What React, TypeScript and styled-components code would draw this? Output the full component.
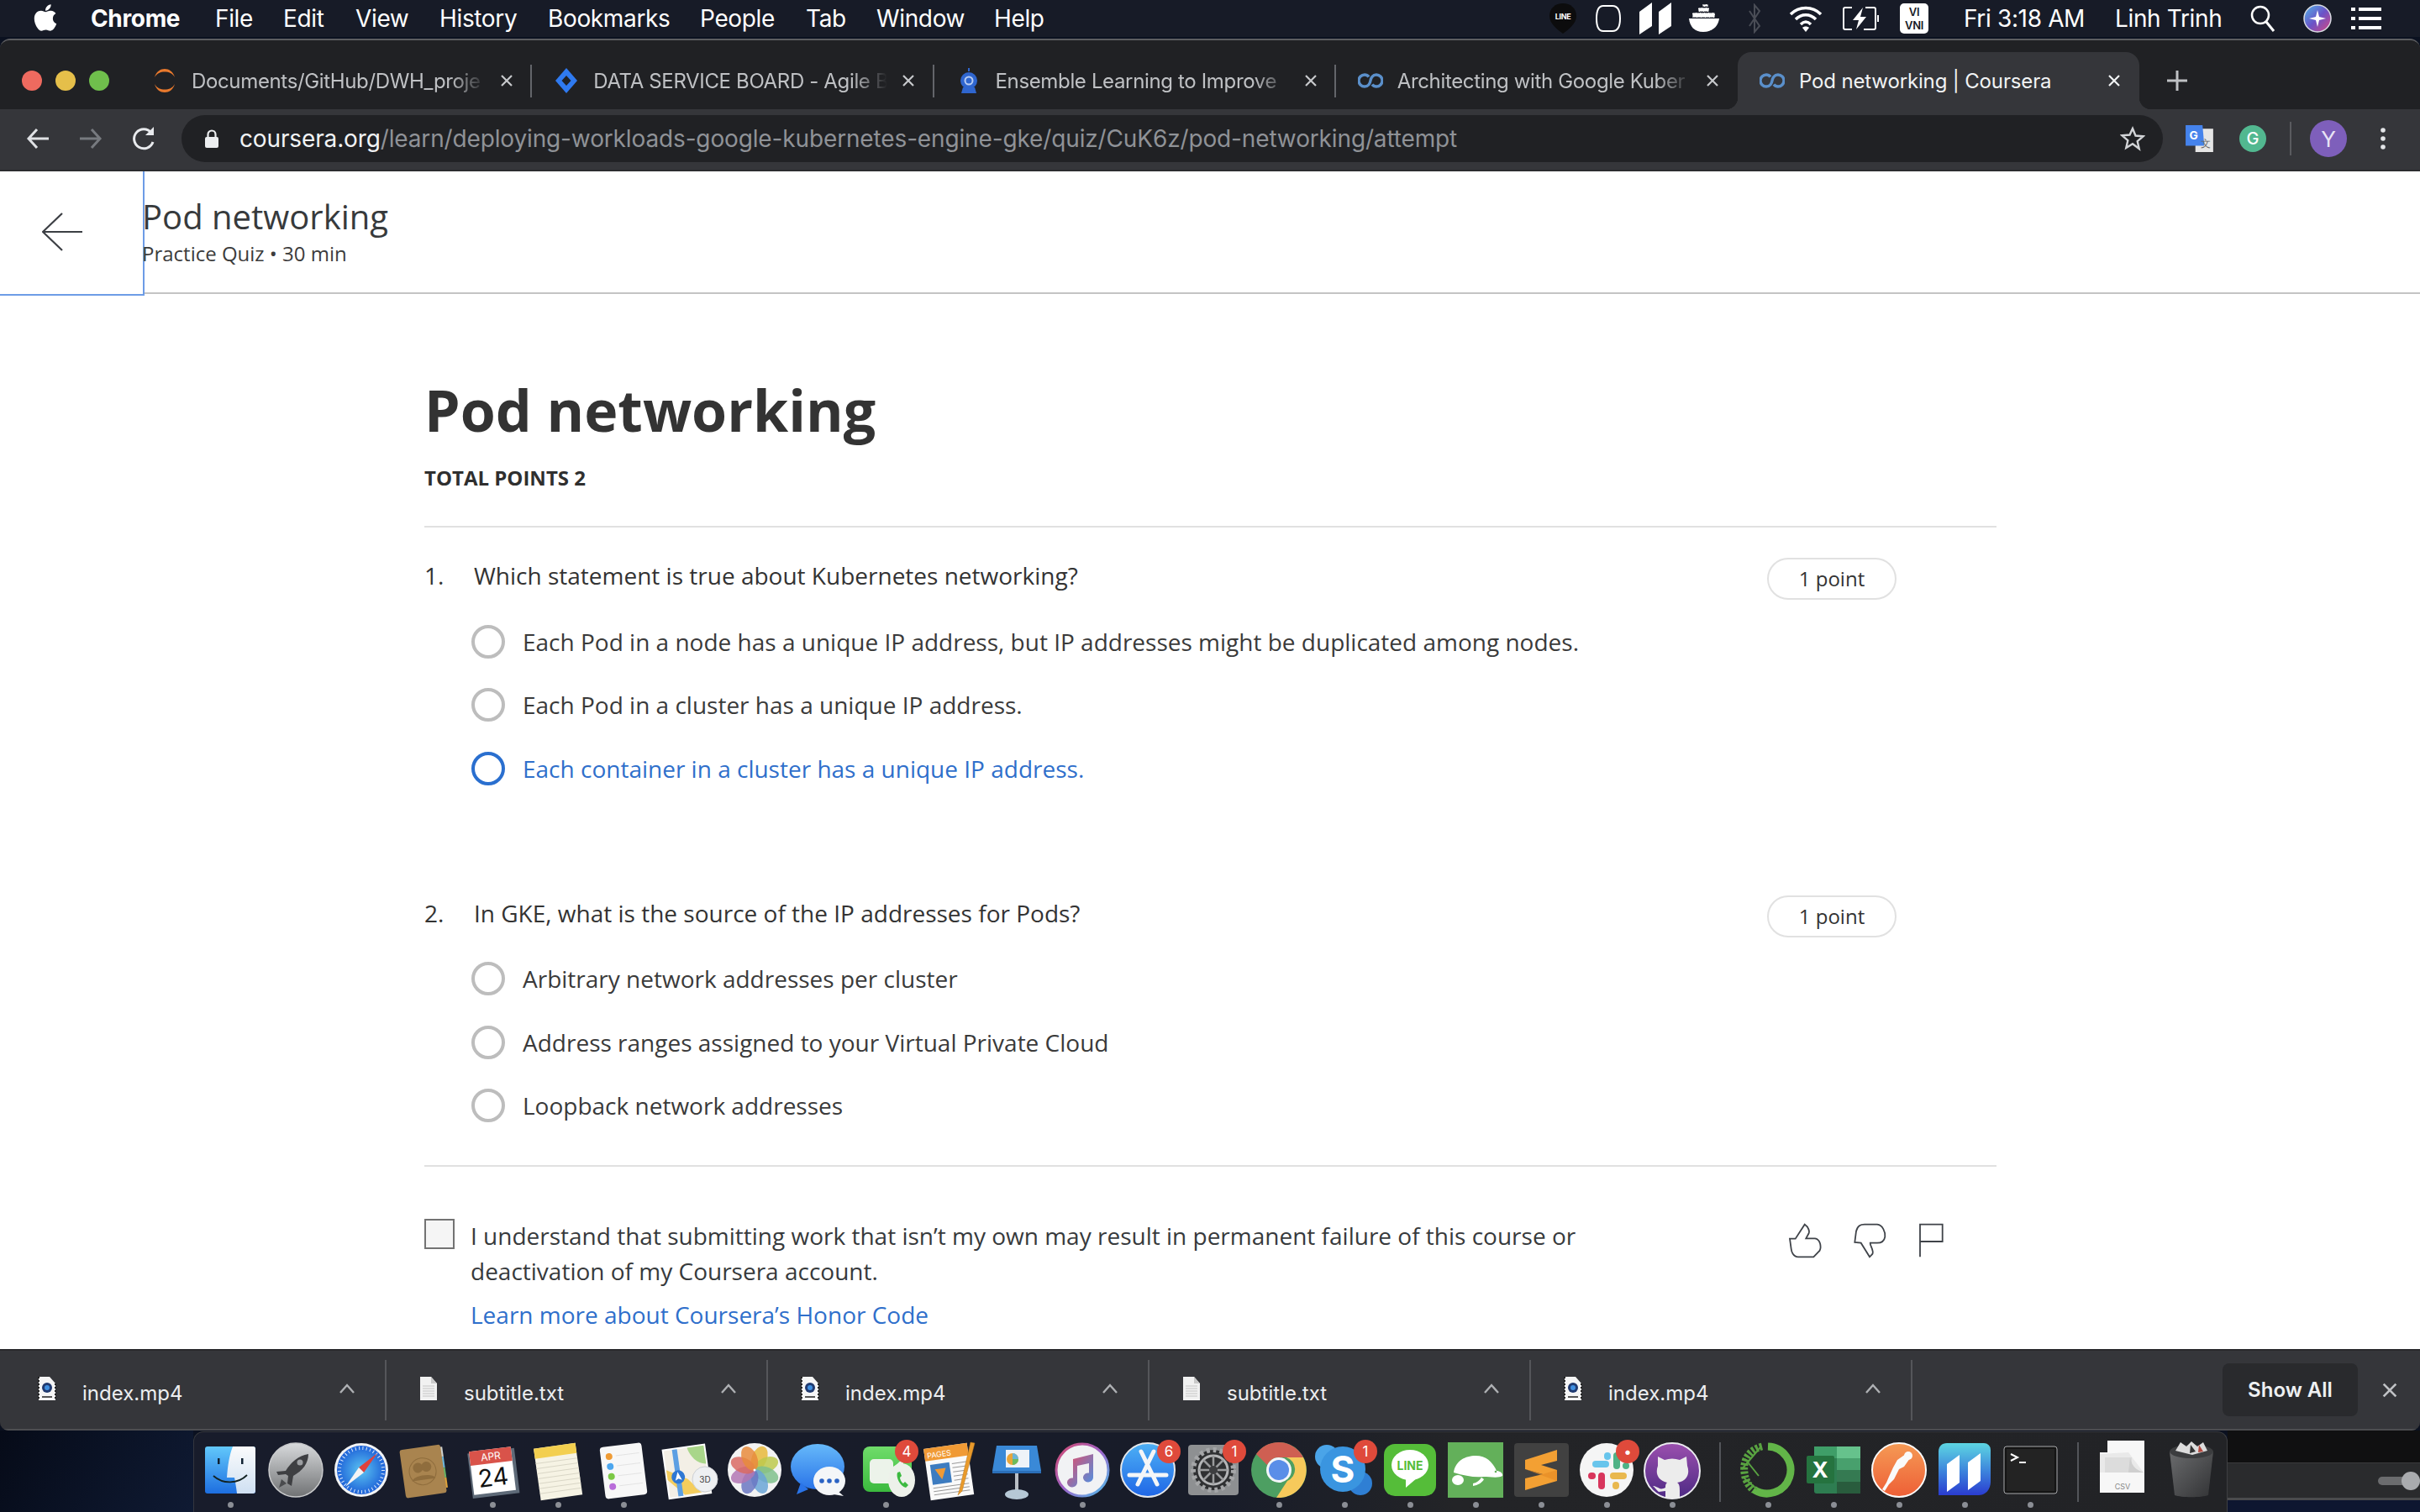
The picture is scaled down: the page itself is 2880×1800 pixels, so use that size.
import React from 'react';
import styled, { createGlobalStyle } from 'styled-components';
import { FaApple } from 'react-icons/fa';

const Global = createGlobalStyle`
  html, body { margin: 0; padding: 0; background: #0c1221; }
  body { overflow: hidden; font-family: "Open Sans", "Liberation Sans", sans-serif; }
  * { box-sizing: border-box; }
`;

const Desktop = styled.div`
  width: 2880px; height: 1800px; display: flex; flex-direction: column;
  background: #0b1120; overflow: hidden;
`;

/* ---------- menu bar ---------- */
const MenuBar = styled.div`
  height: 44px; flex: none; display: flex; align-items: center; padding-left: 38px;
  background: #171b27; color: #fff; font: 400 28px Inter, "Liberation Sans", sans-serif;
  letter-spacing: -0.35px;
`;
const MenuItem = styled.div<{ $w: number; $bold?: boolean }>`
  width: ${p => p.$w}px; flex: none; white-space: nowrap; font-weight: ${p => (p.$bold ? 700 : 400)};
`;
const AppleSlot = styled.div`
  width: 70px; flex: none; display: flex; align-items: center; padding-bottom: 3px;
  svg { width: 32px; height: 36px; }
`;
const Spacer = styled.div`flex: 1;`;
const TraySlot = styled.div<{ $w: number }>`
  width: ${p => p.$w}px; flex: none; height: 44px; display: flex; align-items: center; justify-content: center;
`;
const TrayText = styled.div<{ $w: number; $ml?: number }>`
  width: ${p => p.$w}px; flex: none; margin-left: ${p => p.$ml || 0}px; white-space: nowrap;
`;

/* ---------- browser window ---------- */
const Window = styled.div`
  margin-top: 2px; height: 1657px; flex: none; display: flex; flex-direction: column;
  border-radius: 12px 12px 10px 10px; overflow: hidden; background: #202124;
  border-top: 2px solid #5c5d60;
`;
const TabStrip = styled.div`
  height: 82px; flex: none; display: flex; align-items: flex-end; background: #202124;
`;
const Lights = styled.div`
  width: 155px; height: 68px; flex: none; display: flex; align-items: center; gap: 16px; padding-left: 26px;
`;
const Light = styled.div<{ $c: string }>`
  width: 24px; height: 24px; border-radius: 50%; background: ${p => p.$c};
`;
const Tab = styled.div<{ $active?: boolean; $sep?: boolean }>`
  width: 478.25px; height: 68px; flex: none; position: relative; display: flex; align-items: center;
  padding-left: 25px; color: ${p => (p.$active ? '#f1f3f4' : '#bfc1c4')};
  font: 400 24px Inter, "Liberation Sans", sans-serif; letter-spacing: ${p => (p.$active ? '-0.15px' : '-0.35px')};
  ${p => p.$active && `
    background: #35363a; border-radius: 16px 16px 0 0;
    &::before, &::after { content: ""; position: absolute; bottom: 0; width: 14px; height: 14px; }
    &::before { left: -14px; background: radial-gradient(circle at 0 0, transparent 14px, #35363a 14.5px); }
    &::after { right: -14px; background: radial-gradient(circle at 100% 0, transparent 14px, #35363a 14.5px); }
  `}
`;
const TabSep = styled.div`
  position: absolute; right: 0; top: 15px; height: 39px; width: 2px; background: #63656a;
`;
const FavSlot = styled.div`
  width: 32px; height: 32px; flex: none; display: flex; align-items: center; justify-content: center;
`;
const TabTitle = styled.div<{ $fade?: boolean }>`
  margin-left: 16px; width: 350px; overflow: hidden; white-space: nowrap; flex: none;
  ${p => p.$fade && `-webkit-mask-image: linear-gradient(90deg, #000 88%, transparent 100%);
    mask-image: linear-gradient(90deg, #000 88%, transparent 100%);`}
`;
const TabClose = styled.div`
  margin-left: 15px; width: 20px; height: 20px; flex: none; display: flex; align-items: center; justify-content: center;
`;
const PlusSlot = styled.div`
  margin-left: 31px; height: 68px; display: flex; align-items: center;
`;

const Toolbar = styled.div`
  height: 74px; flex: none; display: flex; align-items: center; background: #35363a;
  border-bottom: 2px solid #2b2c2f; padding: 0 0 2px 7px;
`;
const NavSlot = styled.div<{ $w: number }>`
  width: ${p => p.$w}px; flex: none; height: 56px; display: flex; align-items: center; justify-content: center;
`;
const Address = styled.div`
  width: 2358px; height: 56px; flex: none; margin-left: 5px; border-radius: 28px; background: #202124;
  display: flex; align-items: center; padding-left: 27px;
  font: 400 28px Inter, "Liberation Sans", sans-serif; letter-spacing: -0.14px; white-space: nowrap;
`;
const LockSlot = styled.div`width: 42px; flex: none; display: flex;`;
const Host = styled.span`color: #f1f3f4;`;
const UrlPath = styled.span`color: #8f9297;`;
const StarSlot = styled.div`
  margin-left: auto; margin-right: 21px; display: flex;
`;
const ToolSep = styled.div`width: 2px; height: 40px; background: #5a5b5f; flex: none; margin: 0 22px 0 25px;`;
const Avatar = styled.div`
  width: 44px; height: 44px; flex: none; border-radius: 50%; background: #7e5fbb; color: #e9e3f5;
  font: 400 26px Inter, sans-serif; display: flex; align-items: center; justify-content: center;
`;

/* ---------- page ---------- */
const Page = styled.div`
  flex: 1; min-height: 0; background: #fff; overflow: hidden; color: #333;
  font-family: "Open Sans", "Liberation Sans", sans-serif;
`;
const PageHeader = styled.header`
  height: 146px; display: flex; border-bottom: 2px solid #c4c4c4;
`;
const BackButton = styled.button`
  width: 170px; height: 146px; flex: none; padding: 0 22px 2px 0; border: 0; background: #fff;
  outline: 2px solid #6d9ce6; outline-offset: 0; display: flex; align-items: center; justify-content: center;
`;
const HeaderText = styled.div`
  margin-left: -1px; padding-top: 30px; display: flex; flex-direction: column;
`;
const HeaderTitle = styled.div`font-size: 40px; line-height: 48px; color: #373a3c;`;
const HeaderSub = styled.div`font-size: 24px; line-height: 34px; margin-top: 3px; color: #3c3c3c;`;

const Content = styled.main`width: 1871px; margin-left: 505px;`;
const Heading = styled.h1`
  margin: 93px 0 0; font-size: 68px; line-height: 90px; font-weight: 700; color: #333;
`;
const TotalPoints = styled.div`
  margin-top: 19px; font-size: 24px; line-height: 34px; font-weight: 700; color: #2f2f2f;
`;
const Divider = styled.div<{ $mt: number }>`
  height: 2px; background: #e1e1e1; margin-top: ${p => p.$mt}px;
`;
const Question = styled.section<{ $mt: number }>`margin-top: ${p => p.$mt}px;`;
const QuestionRow = styled.div`display: flex; align-items: center; font-size: 28px; line-height: 42px; height: 42px;`;
const Num = styled.div`width: 59px; flex: none;`;
const QText = styled.div`flex: 1;`;
const PointPill = styled.div`
  width: 154px; height: 50px; margin-right: 119px; margin-top: 8px; flex: none; border: 2px solid #e1e1e1; border-radius: 25px;
  display: flex; align-items: center; justify-content: center; font-size: 24px; color: #333;
`;
const Options = styled.div`margin-top: 20px; padding-left: 56px;`;
const Option = styled.div<{ $on?: boolean }>`
  height: 75.5px; display: flex; align-items: center; font-size: 28px;
  color: ${p => (p.$on ? '#2f6fcb' : '#3a3a3a')};
`;
const Radio = styled.div<{ $on?: boolean }>`
  width: 40px; height: 40px; flex: none; border-radius: 50%; margin-right: 21px;
  border: 4px solid ${p => (p.$on ? '#2a6fcf' : '#bdbdbd')};
`;
const Honor = styled.div`margin-top: 62px; display: flex; align-items: flex-start;`;
const Check = styled.div`
  width: 36px; height: 36px; flex: none; border: 2px solid #737373; background: #f5f5f5; margin-right: 19px;
`;
const HonorCopy = styled.div`
  font-size: 28px; line-height: 42px; margin-top: -1px; color: #373a3c;
`;
const HonorLink = styled.a`
  display: block; margin-top: 10px; color: #2f6fcb; text-decoration: none;
`;
const Feedback = styled.div`
  margin-left: auto; margin-right: 62px; margin-top: 4px; display: flex; gap: 35px;
`;

/* ---------- downloads ---------- */
const Downloads = styled.div`
  height: 97px; flex: none; display: flex; background: #35363a; border-top: 2px solid #29292c;
  border-bottom: 2px solid #4d4e51; font: 400 24px Inter, "Liberation Sans", sans-serif; color: #eceef0;
  position: relative; align-items: center; padding-left: 6px;
`;
const DownloadItem = styled.div`
  width: 454px; height: 72px; flex: none; border-right: 2px solid #55565a; display: flex; align-items: center;
  position: relative; padding-left: 38px;
  svg:first-child { margin-top: -4px; }
`;
const DownloadName = styled.div`margin-left: 30px; margin-top: 8px; flex: 1;`;
const Caret = styled.div`margin-right: 35px; display: flex; margin-top: 0;`;
const ShowAll = styled.div`
  margin-left: 369px; width: 161px; height: 63px; flex: none; background: #292a2d; border-radius: 8px;
  display: flex; align-items: center; justify-content: center; font-weight: 600; font-size: 24px; color: #eef0f2;
`;
const DownloadClose = styled.div`margin-left: 27px; display: flex;`;

/* ---------- dock row ---------- */
const BottomRow = styled.div`flex: 1; display: flex; min-height: 0;`;
const Wallpaper = styled.div`
  width: 230px; flex: none; background: linear-gradient(120deg, #060b18, #0f1a33);
`;
const Dock = styled.div`
  width: 2421px; flex: none; margin-top: 1px; border-radius: 12px 12px 0 0; padding: 10px 0 0 4px; display: flex;
  background: linear-gradient(90deg, #181c2b 0%, #181c29 50%, #232427 62%, #222326 100%);
  border-top: 1px solid #3a3b3e; border-left: 1px solid #33363e; border-right: 1px solid #3e3f42;
`;
const DockItem = styled.div`
  width: 78px; flex: none; display: flex; flex-direction: column; align-items: center; position: relative;
  svg { display: block; }
`;
const Dot = styled.div<{ $on?: boolean }>`
  width: 7px; height: 7px; border-radius: 50%; margin-top: 1px; background: ${p => (p.$on ? '#8b8e95' : 'transparent')};
`;
const Badge = styled.div`
  position: absolute; left: 50px; top: -1px; width: 28px; height: 28px; border-radius: 50%;
  background: #df4a3b; color: #fff; font: 400 17px Inter, sans-serif;
  display: flex; align-items: center; justify-content: center;
`;
const DockSep = styled.div`
  width: 36px; flex: none; display: flex; justify-content: center;
  &::after { content: ""; width: 2px; height: 71px; margin-top: 2px; background: #53555a; }
`;
const RightDesk = styled.div`flex: 1; display: flex; flex-direction: column; background: #0f0f10;`;
const RightTop = styled.div`height: 39px; flex: none; background: #101011; border-bottom: 1px solid #3a3a3c;`;
const RightPanel = styled.div`
  height: 44px; flex: none; background: #2a2b2d; display: flex; align-items: center; padding-left: 179px;
  border-bottom: 3px solid #4a4b4d; position: relative;
`;
const SliderTrack = styled.div`width: 40px; height: 10px; background: #6b6c6e; border-radius: 5px;`;
const SliderKnob = styled.div`
  position: absolute; left: 207px; top: 10px; width: 22px; height: 22px; border-radius: 50%; background: #a9abae;
`;
const RightBottom = styled.div`flex: 1; background: #0e1630;`;

/* ---------- small icons ---------- */
const T = styled.svg`display: block; flex: none;`;

const XIcon = ({ c = '#c8cacd', s = 18 }: { c?: string; s?: number }) => (
  <T width={s} height={s} viewBox="0 0 18 18"><path d="M3 3l12 12M15 3L3 15" stroke={c} strokeWidth="2.2" /></T>
);
const CourseraFav = () => (
  <T width="30" height="20" viewBox="0 0 30 20">
    <path d="M13 5.5C11.5 3.5 9.7 3 8 3a7 7 0 000 14c4.5 0 6.5-4 7-7s2.500-7 7-7a7 7 0 010 14c-1.700 0-3.500-.5-5-2.500" fill="none" stroke="#5a8fca" strokeWidth="3.400" />
  </T>
);
const OrangeFav = () => (
  <T width="30" height="32" viewBox="0 0 30 32">
    <path d="M3 12C5 5 10 2 15 2s10 3 12 10C24 7 20 5.500 15 5.500S6 7 3 12z" fill="#e8792d" />
    <path d="M3 20C5 27 10 30 15 30s10-3 12-10C24 25 20 26.500 15 26.500S6 25 3 20z" fill="#e8792d" />
  </T>
);
const JiraFav = () => (
  <T width="30" height="32" viewBox="0 0 30 32">
    <path d="M15 1l13 15-13 15L2 16z" fill="#2f7af0" />
    <path d="M15 10l5.500 6-5.500 6-5.500-6z" fill="#202124" />
  </T>
);
const GkeFav = () => (
  <T width="24" height="32" viewBox="0 0 24 32">
    <path d="M12 1v4" stroke="#2f66cf" strokeWidth="2" />
    <circle cx="12" cy="16" r="10" fill="#2f66cf" />
    <path d="M5 24l-2 7h18l-2-7z" fill="#2f66cf" />
    <circle cx="12" cy="16" r="4.500" fill="none" stroke="#b9cdf2" strokeWidth="2" />
  </T>
);

const AppIcon = ({ children }: { children: React.ReactNode }) => (
  <svg width="78" height="72" viewBox="0 0 78 72">{children}</svg>
);

const Finder = () => (
  <AppIcon>
    <defs>
      <linearGradient id="fb" x1="0" y1="0" x2="0" y2="1"><stop offset="0" stopColor="#62c8fb" /><stop offset="1" stopColor="#1d6ee0" /></linearGradient>
      <linearGradient id="fw" x1="0" y1="0" x2="0" y2="1"><stop offset="0" stopColor="#fafbfc" /><stop offset="1" stopColor="#cfe0f2" /></linearGradient>
    </defs>
    <rect x="9" y="7" width="60" height="56" rx="3" fill="url(#fb)" />
    <path d="M42 7h24a3 3 0 013 3v50a3 3 0 01-3 3H47c-1-8-2-14-3-19h-9c1-14 3-27 7-37z" fill="url(#fw)" />
    <rect x="24" y="21" width="2.500" height="7" fill="#123" />
    <rect x="52" y="21" width="2.500" height="7" fill="#123" />
    <path d="M19 42c11 10 29 10 40-1" fill="none" stroke="#122" strokeWidth="1.800" />
  </AppIcon>
);
const Launchpad = () => (
  <AppIcon>
    <defs><linearGradient id="lp" x1="0" y1="0" x2="0" y2="1"><stop offset="0" stopColor="#d8dadc" /><stop offset="1" stopColor="#707274" /></linearGradient></defs>
    <circle cx="39" cy="35" r="32" fill="url(#lp)" stroke="#c9cacc" strokeWidth="1.500" />
    <path d="M54 16C42 18 33 26 27 36l-11 1 2 4 9-1 3 2-1 9 5 3 2-12c11-6 18-15 18-26z" fill="#3e3f42" />
    <circle cx="44" cy="26" r="3.500" fill="#9c9ea1" />
    <path d="M22 46l-3 10 9-5z" fill="#4a4b4e" />
  </AppIcon>
);
const Safari = () => (
  <AppIcon>
    <defs><radialGradient id="sa"><stop offset="0" stopColor="#5bc4f2" /><stop offset="1" stopColor="#1e62d8" /></radialGradient></defs>
    <circle cx="39" cy="35" r="32" fill="#f2f3f4" />
    <circle cx="39" cy="35" r="29" fill="url(#sa)" />
    <circle cx="39" cy="35" r="26" fill="none" stroke="#dbe8fb" strokeWidth="4" strokeDasharray="1 3.400" />
    <path d="M58 15L36 32l6 6z" fill="#e0413c" />
    <path d="M20 55l22-17-6-6z" fill="#f4f4f4" />
  </AppIcon>
);
const Contacts = () => (
  <AppIcon>
    <g transform="rotate(-8 39 36)">
      <rect x="54" y="10" width="7" height="12" fill="#cfd2cf" />
      <rect x="54" y="22" width="7" height="13" fill="#6bb6dc" />
      <rect x="54" y="35" width="7" height="12" fill="#67b165" />
      <rect x="54" y="47" width="7" height="12" fill="#dfa23a" />
      <rect x="10" y="7" width="49" height="58" rx="3" fill="#a9844f" />
      <circle cx="34" cy="36" r="16" fill="none" stroke="#8f6d3d" strokeWidth="1" />
      <circle cx="29" cy="31" r="6" fill="#8f6d3d" />
      <circle cx="39" cy="31" r="6" fill="#8f6d3d" />
      <path d="M20 46c2-7 26-7 28 0z" fill="#8f6d3d" />
    </g>
  </AppIcon>
);
const Calendar = () => (
  <AppIcon>
    <g transform="rotate(-7 39 36)">
      <rect x="12" y="12" width="56" height="54" fill="#5e6a78" />
      <rect x="14" y="10" width="50" height="52" fill="#fff" />
      <rect x="14" y="10" width="50" height="17" fill="#d9534a" />
      <text x="39" y="23" textAnchor="middle" fontFamily="Inter, sans-serif" fontSize="12" fill="#fff">APR</text>
      <text x="39" y="54" textAnchor="middle" fontFamily="Inter, sans-serif" fontSize="29" fill="#111">24</text>
    </g>
  </AppIcon>
);
const Notes = () => (
  <AppIcon>
    <g transform="rotate(-8 39 36)">
      <rect x="14" y="6" width="50" height="62" fill="#f6f3e4" />
      <rect x="14" y="6" width="50" height="12" fill="#f3cf4f" />
      <path d="M14 24h50M14 30h50M14 36h50M14 42h50M14 48h50M14 54h50M14 60h50" stroke="#d9d6c6" strokeWidth="1" />
    </g>
  </AppIcon>
);
const Reminders = () => (
  <AppIcon>
    <g transform="rotate(-7 39 36)">
      <rect x="14" y="5" width="50" height="62" rx="4" fill="#f7f7f7" />
      <circle cx="24" cy="17" r="4" fill="#ef9b34" /><circle cx="24" cy="29" r="4" fill="#4ca6ee" />
      <circle cx="24" cy="41" r="4" fill="#7cc945" /><circle cx="24" cy="53" r="4" fill="#b96cd9" />
      <path d="M32 17h28M32 29h28M32 41h28M32 53h28" stroke="#e3e3e3" strokeWidth="1" />
    </g>
  </AppIcon>
);
const Maps = () => (
  <AppIcon>
    <g transform="rotate(-8 35 34)">
      <rect x="11" y="8" width="50" height="58" fill="#f3efe6" stroke="#fff" strokeWidth="2" />
      <path d="M40 9h20v22C50 30 42 20 40 9z" fill="#a9d68a" />
      <path d="M12 32l24 14 14 18H30L12 44z" fill="#f3c744" opacity="0.85" />
      <rect x="22" y="9" width="6" height="56" fill="#5c9fe3" />
      <circle cx="25" cy="42" r="8" fill="#2f78d4" />
      <path d="M25 36l4 10-4-2-4 2z" fill="#fff" />
    </g>
    <circle cx="58" cy="46" r="15" fill="#eef0f2" stroke="#cdd0d4" />
    <text x="58" y="50" textAnchor="middle" fontFamily="Inter, sans-serif" fontSize="10" fill="#444">3D</text>
  </AppIcon>
);
const Photos = () => {
  const c = ['#e8b93b', '#bdc94c', '#7fc08c', '#6aa5d6', '#6a77c2', '#b277b4', '#d96a63', '#e78b3c'];
  return (
    <AppIcon>
      <ellipse cx="39" cy="35" rx="32" ry="32" fill="#f3f3f3" />
      {c.map((col, i) => (
        <ellipse key={col} cx="39" cy="20" rx="9" ry="15" fill={col} opacity="0.85" transform={`rotate(${i * 45 + 22} 39 35)`} />
      ))}
      <circle cx="39" cy="35" r="1.500" fill="#fff" />
    </AppIcon>
  );
};
const Messages = () => (
  <AppIcon>
    <defs><linearGradient id="ms" x1="0" y1="0" x2="0" y2="1"><stop offset="0" stopColor="#66b9fa" /><stop offset="1" stopColor="#2a74e8" /></linearGradient></defs>
    <ellipse cx="36" cy="31" rx="32" ry="27" fill="url(#ms)" />
    <path d="M16 50l-5 14 14-6z" fill="#2a74e8" />
    <ellipse cx="50" cy="48" rx="19" ry="17" fill="#f4f6f8" />
    <path d="M60 60l7 6-12-2z" fill="#f4f6f8" />
    <circle cx="41" cy="48" r="2.800" fill="#2b63c4" /><circle cx="50" cy="48" r="2.800" fill="#2b63c4" /><circle cx="59" cy="48" r="2.800" fill="#2b63c4" />
  </AppIcon>
);
const FaceTime = () => (
  <AppIcon>
    <defs><linearGradient id="ft" x1="0" y1="0" x2="0" y2="1"><stop offset="0" stopColor="#6fdc6a" /><stop offset="1" stopColor="#3bba3e" /></linearGradient></defs>
    <rect x="12" y="7" width="58" height="54" rx="8" fill="url(#ft)" />
    <rect x="20" y="22" width="28" height="29" rx="5" fill="#ecf3ea" />
    <path d="M46 34l14-13v30z" fill="#ecf3ea" />
    <ellipse cx="58" cy="47" rx="16" ry="20" fill="#edf1ea" />
    <path d="M53 38c-2 6 3 16 10 18l3-3-4-4-2 2c-2-1-4-5-4-7l2-2-2-5z" fill="#3cba40" />
  </AppIcon>
);
const Pages = () => (
  <AppIcon>
    <g transform="rotate(-8 36 36)">
      <rect x="10" y="6" width="52" height="62" fill="#fafafa" />
      <rect x="10" y="6" width="52" height="15" fill="#f09a35" />
      <text x="13" y="18" fontFamily="Inter, sans-serif" fontSize="9" fill="#fff">PAGES</text>
      <rect x="15" y="26" width="23" height="24" fill="#3d7cc0" />
      <path d="M20 32h13l-6 13z" fill="#f09a35" />
      <path d="M41 28h17M41 33h17M41 38h17M41 43h17M41 48h17M15 54h43M15 58h43M15 62h43" stroke="#9a9a9a" strokeWidth="1" />
    </g>
    <path d="M62 2l-13 56-2 7 5-5 15-57z" fill="#e99a2b" stroke="#bd7a1f" strokeWidth="0.500" />
  </AppIcon>
);
const Keynote = () => (
  <AppIcon>
    <path d="M15 6h48l5 30H10z" fill="#3a89d7" />
    <path d="M10 36h58v3H10z" fill="#2b6fb8" />
    <rect x="26" y="11" width="28" height="21" fill="#eef3f8" />
    <circle cx="34" cy="22" r="7" fill="#e8a53a" /><path d="M34 22v-7a7 7 0 017 7z" fill="#6ab5d8" /><path d="M34 22h7a7 7 0 01-7 7z" fill="#6cbb5e" />
    <rect x="37" y="39" width="4" height="23" fill="#b9bec4" />
    <ellipse cx="39" cy="64" rx="14" ry="6" fill="#b6c8d6" />
  </AppIcon>
);
const ITunes = () => (
  <AppIcon>
    <defs>
      <linearGradient id="it" x1="0" y1="0" x2="1" y2="1"><stop offset="0" stopColor="#d4486c" /><stop offset="0.5" stopColor="#9d64c9" /><stop offset="1" stopColor="#4cc2ec" /></linearGradient>
      <linearGradient id="nt" x1="0" y1="0" x2="1" y2="1"><stop offset="0" stopColor="#e44b68" /><stop offset="1" stopColor="#4a93e6" /></linearGradient>
    </defs>
    <circle cx="39" cy="35" r="31" fill="#f1f2f4" stroke="url(#it)" strokeWidth="3" />
    <path d="M28 22l24-6v28a6 5.500 0 11-5-5.500V27l-14 3v20a6 5.500 0 11-5-5.500z" fill="url(#nt)" />
  </AppIcon>
);
const AppStore = () => (
  <AppIcon>
    <defs><linearGradient id="as" x1="0" y1="0" x2="0" y2="1"><stop offset="0" stopColor="#4db0f5" /><stop offset="1" stopColor="#1f66e6" /></linearGradient></defs>
    <circle cx="39" cy="35" r="32" fill="url(#as)" stroke="#e6e8ea" strokeWidth="2" />
    <path d="M46 13L27 52M31 13l19 39M17 41h44" stroke="#f4f6f8" strokeWidth="5" strokeLinecap="round" fill="none" />
  </AppIcon>
);
const SysPrefs = () => (
  <AppIcon>
    <rect x="9" y="5" width="60" height="60" rx="4" fill="#8e9092" />
    <circle cx="39" cy="35" r="24" fill="#2f3032" />
    <circle cx="39" cy="35" r="24" fill="none" stroke="#a5a6a8" strokeWidth="6" strokeDasharray="4 4" />
    <circle cx="39" cy="35" r="17" fill="none" stroke="#b4b5b7" strokeWidth="3" />
    <path d="M39 18v34M22 35h34M27 23l24 24M51 23L27 47" stroke="#9a9b9d" strokeWidth="2.500" />
    <circle cx="39" cy="35" r="5" fill="#3d3e40" />
  </AppIcon>
);
const Chrome = () => (
  <AppIcon>
    <circle cx="39" cy="35" r="33" fill="#4d9f62" />
    <path d="M39 2a33 33 0 0129 18H39a15 15 0 00-14 9L12 16A33 33 0 0139 2z" fill="#cf5f52" />
    <path d="M68 20a33 33 0 01-32 48l13-20a15 15 0 00-1-28z" fill="#f6c95b" />
    <circle cx="39" cy="35" r="15" fill="#f4f6f8" />
    <circle cx="39" cy="35" r="12" fill="#5a8ee8" />
  </AppIcon>
);
const Skype = () => (
  <AppIcon>
    <circle cx="18" cy="19" r="14" fill="#4aa4e8" />
    <circle cx="58" cy="51" r="14" fill="#2f7fd4" />
    <circle cx="37" cy="34" r="27" fill="#3a95e0" />
    <text x="37" y="50" textAnchor="middle" fontFamily="Inter, sans-serif" fontWeight="700" fontSize="44" fill="#fff">S</text>
  </AppIcon>
);
const Line = () => (
  <AppIcon>
    <rect x="8" y="4" width="62" height="62" rx="13" fill="#55bd39" />
    <ellipse cx="39" cy="29" rx="22" ry="18" fill="#fff" />
    <path d="M34 44v12l14-12z" fill="#fff" />
    <text x="39" y="35" textAnchor="middle" fontFamily="Inter, sans-serif" fontWeight="700" fontSize="14" fill="#55bd39">LINE</text>
  </AppIcon>
);
const Turtle = () => (
  <AppIcon>
    <rect x="6" y="2" width="66" height="66" fill="#63b05a" />
    <path d="M13 38c2-14 14-20 26-20 14 0 21 9 25 18 4 0 8 3 7 6-4 3-16 1-22 1-12 1-23-1-36-5z" fill="#fff" />
    <ellipse cx="18" cy="47" rx="7" ry="6" fill="#fff" />
    <path d="M36 51c5-1 8-4 10-7l3 2c-2 4-7 7-13 8z" fill="#fff" />
    <circle cx="63" cy="37" r="1.300" fill="#63b05a" />
  </AppIcon>
);
const Sublime = () => (
  <AppIcon>
    <rect x="7" y="3" width="65" height="64" rx="4" fill="#414141" />
    <path d="M58 11V24L39 29l19 6V48L20 59V45l21-5-21-6V23z" fill="#f3a033" />
    <path d="M20 34l21 6 17-5V48L20 34z" fill="#e68b25" opacity="0.7" />
  </AppIcon>
);
const Slack = () => (
  <AppIcon>
    <circle cx="39" cy="35" r="32" fill="#f5f5f5" />
    <rect x="22" y="24" width="20" height="8" rx="4" fill="#68c5ec" />
    <rect x="36" y="14" width="8" height="9" rx="4" fill="#68c5ec" />
    <rect x="47" y="14" width="8" height="20" rx="4" fill="#4fb286" />
    <rect x="58" y="26" width="8" height="8" rx="4" fill="#4fb286" />
    <rect x="43" y="38" width="20" height="8" rx="4" fill="#e9b84e" />
    <rect x="46" y="49" width="8" height="9" rx="4" fill="#e9b84e" />
    <rect x="29" y="38" width="8" height="20" rx="4" fill="#d8365c" />
    <rect x="17" y="38" width="9" height="8" rx="4" fill="#d8365c" />
  </AppIcon>
);
const Github = () => (
  <AppIcon>
    <defs><linearGradient id="gh" x1="0" y1="0" x2="0" y2="1"><stop offset="0" stopColor="#9b4fae" /><stop offset="1" stopColor="#4d2a84" /></linearGradient></defs>
    <circle cx="39" cy="36" r="33" fill="url(#gh)" stroke="#ecebf0" strokeWidth="2" />
    <path d="M22 19l8 4c6-2 12-2 18 0l8-4 1 11c3 8 1 18-12 20 3 2 3 6 3 10v9H31v-9l-8 1c-3-2-4-5-7-7 3 0 6 2 8 3 2 1 5 0 7-1 0-3 0-4 2-6-12-3-14-12-11-20z" fill="#ececec" />
  </AppIcon>
);
const CircleApp = () => (
  <AppIcon>
    <path d="M39 7a28 28 0 11-17 51" fill="none" stroke="#62b548" strokeWidth="9" />
    <path d="M32 7C16 11 9 24 11 38c1 10 6 17 11 21" fill="none" stroke="#59a341" strokeWidth="9" strokeDasharray="3 2" />
    <path d="M12 22l16 20M30 8L8 34M10 44l16 14" stroke="#59a341" strokeWidth="2" />
  </AppIcon>
);
const Excel = () => (
  <AppIcon>
    <rect x="16" y="7" width="55" height="56" rx="3" fill="#2e7d51" />
    <rect x="43" y="7" width="28" height="14" fill="#66c28c" />
    <rect x="16" y="7" width="27" height="14" fill="#3f9e68" />
    <rect x="43" y="21" width="28" height="14" fill="#48a06d" />
    <rect x="43" y="49" width="28" height="14" fill="#295c3d" />
    <rect x="43" y="35" width="28" height="14" fill="#357a52" />
    <rect x="7" y="18" width="33" height="33" rx="2" fill="#25733f" />
    <text x="23" y="44" textAnchor="middle" fontFamily="Inter, sans-serif" fontWeight="700" fontSize="26" fill="#fff">X</text>
  </AppIcon>
);
const Postman = () => (
  <AppIcon>
    <defs><linearGradient id="pm" x1="0" y1="0" x2="0" y2="1"><stop offset="0" stopColor="#f59a55" /><stop offset="1" stopColor="#ee5f36" /></linearGradient></defs>
    <circle cx="39" cy="35" r="32" fill="url(#pm)" stroke="#fafafa" strokeWidth="2" />
    <path d="M47 16l5 5-7 10-6 3-6 12-6 6-5 8-3-2 5-8 3-7 5-11 5-9z" fill="#fafafa" />
    <circle cx="50" cy="18" r="5" fill="#fafafa" />
  </AppIcon>
);
const Mweb = () => (
  <AppIcon>
    <defs><linearGradient id="mw" x1="0" y1="0" x2="0" y2="1"><stop offset="0" stopColor="#5dd6e2" /><stop offset="0.55" stopColor="#3c82dc" /><stop offset="1" stopColor="#2a3cd0" /></linearGradient></defs>
    <path d="M18 3h44a8 8 0 018 8v38c0 9-6 16-14 16H8V13C8 7 12 3 18 3z" fill="url(#mw)" />
    <path d="M18 28l15-11v33L18 61z" fill="#fff" />
    <path d="M43 26l15-11v33L43 59z" fill="#fff" />
  </AppIcon>
);
const Terminal = () => (
  <AppIcon>
    <rect x="8" y="7" width="63" height="56" rx="3" fill="#141414" stroke="#a9aaad" strokeWidth="1" />
    <rect x="11" y="10" width="57" height="50" fill="#232323" />
    <path d="M16 16l8 4-8 4" fill="none" stroke="#fff" strokeWidth="2" />
    <path d="M26 26h8" stroke="#fff" strokeWidth="2" />
  </AppIcon>
);
const CsvFile = () => (
  <AppIcon>
    <path d="M17 0h44v62H8V14h9z" fill="#f7f7f7" />
    <path d="M8 16l34-2 18 24H8z" fill="#e9e9e9" />
    <path d="M14 20h32v18H14z" fill="#dcdcdc" />
    <path d="M44 20c2 10 6 15 17 18l-19 0z" fill="#cfcfcf" />
    <text x="35" y="58" textAnchor="middle" fontFamily="Inter, sans-serif" fontSize="9" fill="#888">CSV</text>
  </AppIcon>
);
const Trash = () => (
  <AppIcon>
    <defs><linearGradient id="tr" x1="0" y1="0" x2="1" y2="1"><stop offset="0" stopColor="#6a6b6d" /><stop offset="1" stopColor="#323335" /></linearGradient></defs>
    <path d="M13 13h52l-6 52c-8 3-32 3-40 0z" fill="url(#tr)" />
    <ellipse cx="39" cy="13" rx="26" ry="8" fill="#3c3d3f" />
    <path d="M20 12l6-10 7 5 6-6 7 6 7-5 5 10-18 5z" fill="#dcdcdc" />
    <path d="M38 5l6 8-7 2z" fill="#333" /><path d="M48 5l5 8-6 1z" fill="#b3493f" />
  </AppIcon>
);

/* ---------- data ---------- */
const menus: [string, number, boolean?][] = [
  ['Chrome', 148, true], ['File', 81], ['Edit', 86], ['View', 100], ['History', 129],
  ['Bookmarks', 181], ['People', 126], ['Tab', 84], ['Window', 140], ['Help', 70],
];
const tabs: [string, React.ReactNode, boolean][] = [
  ['Documents/GitHub/DWH_proje', <OrangeFav key="o" />, true],
  ['DATA SERVICE BOARD - Agile B', <JiraFav key="j" />, true],
  ['Ensemble Learning to Improve', <GkeFav key="g" />, true],
  ['Architecting with Google Kuber', <CourseraFav key="c" />, false],
];
type DockEntry = { I: React.FC; on?: boolean; badge?: string; sep?: boolean };
const apps: DockEntry[] = [
  { I: Finder, on: true }, { I: Launchpad }, { I: Safari }, { I: Contacts }, { I: Calendar, on: true },
  { I: Notes, on: true }, { I: Reminders, on: true }, { I: Maps }, { I: Photos }, { I: Messages },
  { I: FaceTime, on: true, badge: '4' }, { I: Pages }, { I: Keynote }, { I: ITunes, on: true },
  { I: AppStore, badge: '6' }, { I: SysPrefs, badge: '1' }, { I: Chrome, on: true },
  { I: Skype, on: true, badge: '1' }, { I: Line, on: true }, { I: Turtle, on: true }, { I: Sublime, on: true },
  { I: Slack, on: true, badge: '•' }, { I: Github, on: true }, { I: CircleApp, on: true, sep: true },
  { I: Excel, on: true }, { I: Postman, on: true }, { I: Mweb, on: true }, { I: Terminal, on: true },
  { I: CsvFile, sep: true }, { I: Trash },
];

const Mp4Icon = () => (
  <T width="24" height="30" viewBox="0 0 24 30">
    <path d="M2 1h13l7 8v20H2z" fill="#f5f5f5" />
    <path d="M2 1v28M22 9v20" stroke="#222" strokeWidth="2" strokeDasharray="2 2" />
    <circle cx="12" cy="14" r="6" fill="#203a70" /><circle cx="12" cy="14" r="3" fill="#3f8fe0" />
    <rect x="6" y="24" width="12" height="2" fill="#555" />
  </T>
);
const TxtIcon = () => (
  <T width="24" height="30" viewBox="0 0 24 30">
    <path d="M2 1h13l7 8v20H2z" fill="#f1f1f1" />
    <path d="M15 1v8h7z" fill="#c9c9c9" />
    <path d="M5 12h14M5 15h14M5 18h14M5 21h14M5 24h14" stroke="#c4c4c4" strokeWidth="1" />
  </T>
);
const CaretIcon = () => (
  <T width="20" height="14" viewBox="0 0 20 14"><path d="M2 12l8-9 8 9" fill="none" stroke="#aeb0b3" strokeWidth="2.400" /></T>
);

const downloads: [string, boolean][] = [
  ['index.mp4', true], ['subtitle.txt', false], ['index.mp4', true],
  ['subtitle.txt', false], ['index.mp4', true],
];

export default function App() {
  return (
    <>
      <Global />
      <Desktop>
        <MenuBar>
          <AppleSlot><FaApple color="#fff" /></AppleSlot>
          {menus.map(([m, w, b]) => <MenuItem key={m} $w={w} $bold={b}>{m}</MenuItem>)}
          <Spacer />
          <TraySlot $w={54}>
            <T width="34" height="38" viewBox="0 0 34 38">
              <path d="M17 1c9 0 16 6 16 15 0 9-9 16-16 21C10 32 1 25 1 16 1 7 8 1 17 1z" fill="#0c0c0d" />
              <text x="17" y="20" textAnchor="middle" fontFamily="Inter, sans-serif" fontWeight="700" fontSize="9" fill="#fff">LINE</text>
            </T>
          </TraySlot>
          <TraySlot $w={54}>
            <T width="32" height="34" viewBox="0 0 32 34"><path d="M10 2h11c7 0 9 6 9 15s-2 15-9 15H10C4 32 2 26 2 17S4 2 10 2z" fill="none" stroke="#fff" strokeWidth="2" /></T>
          </TraySlot>
          <TraySlot $w={57}>
            <T width="42" height="40" viewBox="0 0 42 40"><path d="M2 12L17 1v28L2 39zM25 12L40 1v28L25 39z" fill="#fff" /></T>
          </TraySlot>
          <TraySlot $w={60}>
            <T width="38" height="34" viewBox="0 0 38 34">
              <path d="M1 17h36c-1 9-8 16-19 16S2 26 1 17z" fill="#fff" />
              <path d="M5 10h27v6H5zM12 4h13v5H12zM17 0h7v3h-7z" fill="#fff" stroke="#171b27" strokeWidth="0.800" strokeDasharray="4 1" />
            </T>
          </TraySlot>
          <TraySlot $w={59}>
            <T width="18" height="36" viewBox="0 0 18 36"><path d="M3 9l12 18-6 7V2l6 7L3 27" fill="none" stroke="#4a4d56" strokeWidth="2" /></T>
          </TraySlot>
          <TraySlot $w={64}>
            <T width="42" height="34" viewBox="0 0 42 34">
              <path d="M3 12c10-10 26-10 36 0M9 18c7-7 17-7 24 0M15 24c4-4 8-4 12 0" fill="none" stroke="#fff" strokeWidth="3.500" />
              <path d="M21 33l-4-5c2-2 6-2 8 0z" fill="#fff" />
            </T>
          </TraySlot>
          <TraySlot $w={67}>
            <T width="46" height="30" viewBox="0 0 46 30">
              <path d="M12 2H4a2 2 0 00-2 2v22a2 2 0 002 2h8M28 2h10a2 2 0 012 2v22a2 2 0 01-2 2H26" fill="none" stroke="#fff" strokeWidth="2" />
              <path d="M25 2L13 17h7l-3 11 12-15h-7z" fill="#fff" />
              <path d="M43 11v8" stroke="#fff" strokeWidth="2" />
            </T>
          </TraySlot>
          <TraySlot $w={60}>
            <T width="34" height="36" viewBox="0 0 34 36">
              <rect x="0" y="0" width="34" height="36" rx="5" fill="#fff" />
              <text x="17" y="15" textAnchor="middle" fontFamily="Inter, sans-serif" fontWeight="600" fontSize="13" fill="#171b27">VI</text>
              <text x="17" y="31" textAnchor="middle" fontFamily="Inter, sans-serif" fontWeight="600" fontSize="13" fill="#171b27">VNI</text>
            </T>
          </TraySlot>
          <TrayText $w={180} $ml={29}>Fri 3:18 AM</TrayText>
          <TrayText $w={143}>Linh Trinh</TrayText>
          <TraySlot $w={65}>
            <T width="32" height="34" viewBox="0 0 32 34"><circle cx="13" cy="13" r="10" fill="none" stroke="#fff" strokeWidth="2.500" /><path d="M20 21l9 11" stroke="#fff" strokeWidth="3" /></T>
          </TraySlot>
          <TraySlot $w={65}>
            <T width="34" height="34" viewBox="0 0 34 34">
              <defs><linearGradient id="si" x1="0" y1="0" x2="1" y2="1"><stop offset="0" stopColor="#4fb6e8" /><stop offset="0.5" stopColor="#6a54c8" /><stop offset="1" stopColor="#d8457e" /></linearGradient></defs>
              <circle cx="17" cy="17" r="16" fill="url(#si)" stroke="#d8dbe2" strokeWidth="1.500" />
              <path d="M17 7l2 8 8 2-8 2-2 8-2-8-8-2 8-2z" fill="#fff" />
            </T>
          </TraySlot>
          <TraySlot $w={52}>
            <T width="36" height="28" viewBox="0 0 36 28">
              <path d="M0 3h5M9 3h27M0 14h5M9 14h27M0 25h5M9 25h27" stroke="#fff" strokeWidth="4" />
            </T>
          </TraySlot>
          <TraySlot $w={38} />
        </MenuBar>

        <Window>
          <TabStrip>
            <Lights>
              <Light $c="#ee6a5f" /><Light $c="#e5bf4a" /><Light $c="#6fbf4c" />
            </Lights>
            {tabs.map(([t, fav, sep]) => (
              <Tab key={t}>
                <FavSlot>{fav}</FavSlot>
                <TabTitle $fade>{t}</TabTitle>
                <TabClose><XIcon /></TabClose>
                {sep && <TabSep />}
              </Tab>
            ))}
            <Tab $active>
              <FavSlot><CourseraFav /></FavSlot>
              <TabTitle>Pod networking | Coursera</TabTitle>
              <TabClose><XIcon c="#f1f3f4" /></TabClose>
            </Tab>
            <PlusSlot>
              <T width="28" height="28" viewBox="0 0 28 28"><path d="M14 2v24M2 14h24" stroke="#bfc1c4" strokeWidth="3" /></T>
            </PlusSlot>
          </TabStrip>

          <Toolbar>
            <NavSlot $w={76}>
              <T width="28" height="28" viewBox="0 0 28 28"><path d="M13 3L3 14l10 11M3 14h24" fill="none" stroke="#dfe1e4" strokeWidth="3" /></T>
            </NavSlot>
            <NavSlot $w={50}>
              <T width="28" height="28" viewBox="0 0 28 28"><path d="M15 3l10 11-10 11M25 14H1" fill="none" stroke="#777a7f" strokeWidth="3" /></T>
            </NavSlot>
            <NavSlot $w={78}>
              <T width="30" height="32" viewBox="0 0 30 32">
                <path d="M25 20a11.500 11.500 0 11-2-11" fill="none" stroke="#e8eaed" strokeWidth="3" />
                <path d="M26 2v10H16z" fill="#e8eaed" />
              </T>
            </NavSlot>
            <Address>
              <LockSlot>
                <T width="18" height="24" viewBox="0 0 18 24">
                  <rect x="1" y="10" width="16" height="13" rx="2" fill="#eceef0" />
                  <path d="M4.500 10V7a4.500 4.500 0 019 0v3" fill="none" stroke="#eceef0" strokeWidth="2.200" />
                </T>
              </LockSlot>
              <Host>coursera.org</Host>
              <UrlPath>/learn/deploying-workloads-google-kubernetes-engine-gke/quiz/CuK6z/pod-networking/attempt</UrlPath>
              <StarSlot>
                <T width="30" height="30" viewBox="0 0 30 30">
                  <path d="M15 3l3.500 8.500 9 .8-6.800 5.900 2 8.800L15 21.300 7.300 26l2-8.800-6.800-5.900 9-.8z" fill="none" stroke="#d2d4d7" strokeWidth="2.400" />
                </T>
              </StarSlot>
            </Address>
            <NavSlot $w={88}>
              <T width="36" height="36" viewBox="0 0 34 32">
                <path d="M12 5h20v26H12z" fill="#e6e6e6" />
                <path d="M1 1h19l2 23H1z" fill="#4583ec" />
                <text x="10" y="17" textAnchor="middle" fontFamily="Inter, sans-serif" fontWeight="700" fontSize="13" fill="#fff">G</text>
                <text x="24" y="25" textAnchor="middle" fontFamily="Inter, sans-serif" fontSize="11" fill="#666">文</text>
              </T>
            </NavSlot>
            <NavSlot $w={38}>
              <T width="32" height="32" viewBox="0 0 32 32">
                <circle cx="16" cy="16" r="16" fill="#52b890" />
                <text x="16" y="23" textAnchor="middle" fontFamily="Inter, sans-serif" fontWeight="500" fontSize="20" fill="#fff">G</text>
              </T>
            </NavSlot>
            <ToolSep />
            <Avatar>Y</Avatar>
            <NavSlot $w={86}>
              <T width="6" height="26" viewBox="0 0 6 26"><circle cx="3" cy="3" r="2.800" fill="#e3e5e8" /><circle cx="3" cy="13" r="2.800" fill="#e3e5e8" /><circle cx="3" cy="23" r="2.800" fill="#e3e5e8" /></T>
            </NavSlot>
          </Toolbar>

          <Page>
            <PageHeader>
              <BackButton>
                <T width="48" height="46" viewBox="0 0 48 46"><path d="M24 1L1 23l23 22M1 23h47" fill="none" stroke="#3c3f44" strokeWidth="2.200" /></T>
              </BackButton>
              <HeaderText>
                <HeaderTitle>Pod networking</HeaderTitle>
                <HeaderSub>Practice Quiz • 30 min</HeaderSub>
              </HeaderText>
            </PageHeader>
            <Content>
              <Heading>Pod networking</Heading>
              <TotalPoints>TOTAL POINTS 2</TotalPoints>
              <Divider $mt={40} />
              <Question $mt={36}>
                <QuestionRow>
                  <Num>1.</Num>
                  <QText>Which statement is true about Kubernetes networking?</QText>
                  <PointPill>1 point</PointPill>
                </QuestionRow>
                <Options>
                  <Option><Radio />Each Pod in a node has a unique IP address, but IP addresses might be duplicated among nodes.</Option>
                  <Option><Radio />Each Pod in a cluster has a unique IP address.</Option>
                  <Option $on><Radio $on />Each container in a cluster has a unique IP address.</Option>
                </Options>
              </Question>
              <Question $mt={113}>
                <QuestionRow>
                  <Num>2.</Num>
                  <QText>In GKE, what is the source of the IP addresses for Pods?</QText>
                  <PointPill>1 point</PointPill>
                </QuestionRow>
                <Options>
                  <Option><Radio />Arbitrary network addresses per cluster</Option>
                  <Option><Radio />Address ranges assigned to your Virtual Private Cloud</Option>
                  <Option><Radio />Loopback network addresses</Option>
                </Options>
              </Question>
              <Divider $mt={33} />
              <Honor>
                <Check />
                <HonorCopy>
                  I understand that submitting work that isn’t my own may result in permanent failure of this course or<br />
                  deactivation of my Coursera account.
                  <HonorLink>Learn more about Coursera’s Honor Code</HonorLink>
                </HonorCopy>
                <Feedback>
                  <T width="42" height="44" viewBox="78 36 42 44">
                    <path d="M80 55.700H86.700L97.700 38.700L101 41.700C103 45 103.500 47 102.700 49L99.300 55.300H110C116 56 118 65 115.500 70L108.300 77.300H90C84 77.300 82 71 81.700 68Z" fill="none" stroke="#3f4349" strokeWidth="1.800" />
                  </T>
                  <T width="42" height="44" viewBox="156 36 42 44">
                    <path d="M158.300 60L160 46.700C161.700 40 165 38.700 170 38.700H185C191.700 39.300 195 48.300 194.300 53.300C193.300 59.300 188.300 60.700 185 60.700H176.700C176 63.300 181.700 70 179.300 74L176 77.300L165.700 60.700Z" fill="none" stroke="#3f4349" strokeWidth="1.800" />
                  </T>
                  <T width="32" height="44" viewBox="232 36 32 44">
                    <path d="M235 77.300V38.700H261.700V59H235" fill="none" stroke="#3f4349" strokeWidth="1.800" />
                  </T>
                </Feedback>
              </Honor>
            </Content>
          </Page>

          <Downloads>
            {downloads.map(([n, isVideo], i) => (
              <DownloadItem key={i}>
                {isVideo ? <Mp4Icon /> : <TxtIcon />}
                <DownloadName>{n}</DownloadName>
                <Caret><CaretIcon /></Caret>
              </DownloadItem>
            ))}
            <ShowAll>Show All</ShowAll>
            <DownloadClose><XIcon s={22} c="#bfc1c4" /></DownloadClose>
          </Downloads>
        </Window>

        <BottomRow>
          <Wallpaper />
          <Dock>
            {apps.map(({ I, on, badge, sep }, i) => (
              <React.Fragment key={i}>
                {sep && <DockSep />}
                <DockItem>
                  <I />
                  {badge && <Badge>{badge}</Badge>}
                  <Dot $on={on} />
                </DockItem>
              </React.Fragment>
            ))}
          </Dock>
          <RightDesk>
            <RightTop />
            <RightPanel>
              <SliderTrack />
              <SliderKnob />
            </RightPanel>
            <RightBottom />
          </RightDesk>
        </BottomRow>
      </Desktop>
    </>
  );
}
